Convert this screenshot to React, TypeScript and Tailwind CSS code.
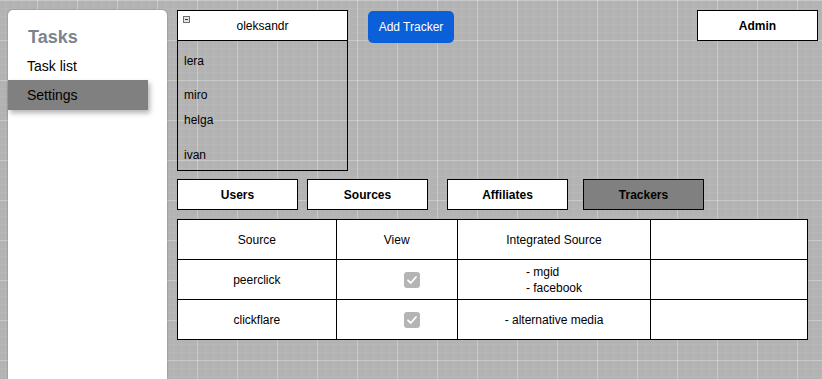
import React from 'react';

const tabs = [
  { label: 'Users', cls: '', active: false },
  { label: 'Sources', cls: 'ml-[9px]', active: false },
  { label: 'Affiliates', cls: 'ml-[19px]', active: false },
  { label: 'Trackers', cls: 'ml-[15px]', active: true },
];

const users = [
  { name: 'lera', cls: 'mt-[12px]' },
  { name: 'miro', cls: 'mt-[18px]' },
  { name: 'helga', cls: 'mt-[9px]' },
  { name: 'ivan', cls: 'mt-[19px]' },
];

const trackers = [
  { source: 'peerclick', integrated: ['- mgid', '- facebook'] },
  { source: 'clickflare', integrated: ['- alternative media'] },
];

function CheckedBox() {
  return (
    <div className="flex h-[16px] w-[16px] items-center justify-center rounded-[3px] bg-[#b4b4b4]">
      <svg width="12" height="12" viewBox="0 0 12 12" fill="none">
        <path d="M2 6.3 L4.8 9 L10 3" stroke="white" strokeWidth="1.8" strokeLinecap="round" strokeLinejoin="round" />
      </svg>
    </div>
  );
}

export default function App() {
  return (
    <div className="flex min-h-screen w-full bg-[#b3b3b3] bg-[linear-gradient(to_right,rgba(255,255,255,0.25)_1px,transparent_1px),linear-gradient(to_bottom,rgba(255,255,255,0.25)_1px,transparent_1px),linear-gradient(to_right,rgba(255,255,255,0.06)_1px,transparent_1px),linear-gradient(to_bottom,rgba(255,255,255,0.06)_1px,transparent_1px)] bg-[size:40px_40px,40px_40px,8px_8px,8px_8px] bg-[position:37px_0,0_0,5px_0,0_0] font-['Liberation_Sans',Arial,sans-serif] text-[12px] text-black">
      {/* sidebar */}
      <aside className="ml-[8px] mt-[10px] w-[159px] shrink-0 rounded-t-[5px] bg-white pt-[15px] shadow-[0_0_2px_rgba(0,0,0,0.35)]">
        <div className="pl-[20px] text-[18px] font-bold leading-[24px] text-[#7b848c]">Tasks</div>
        <div className="mt-[7px] pl-[19px] text-[14px] leading-[20px]">Task list</div>
        <div className="mt-[4px] flex h-[30px] w-[140px] items-center bg-[#808080] pl-[19px] text-[14px] shadow-[2px_3px_5px_rgba(0,0,0,0.3)]">
          Settings
        </div>
      </aside>

      <main className="ml-[10px] flex flex-1 flex-col pr-[4px] pt-[10px]">
        {/* top row */}
        <div className="flex items-start">
          <div className="flex h-[161px] w-[171px] flex-col border border-black">
            <div className="relative flex h-[30px] items-center justify-center border-b border-black bg-white">
              <span className="absolute left-[5px] top-[5px] flex h-[7px] w-[7px] items-center justify-center border border-[#6f6f6f] bg-[#e4e4e4]">
                <span className="h-px w-[3px] bg-[#333]" />
              </span>
              oleksandr
            </div>
            {users.map((u) => (
              <div key={u.name} className={`${u.cls} pl-[6px] leading-[16px]`}>
                {u.name}
              </div>
            ))}
          </div>

          <button className="ml-[20px] mt-[1px] h-[32px] w-[86px] rounded-[5px] bg-[#0b5fd9] text-[12px] text-white">
            Add Tracker
          </button>

          <button className="ml-auto h-[31px] w-[121px] border border-black bg-white text-[12px] font-bold">
            Admin
          </button>
        </div>

        {/* tabs */}
        <div className="mt-[8px] flex">
          {tabs.map((t) => (
            <button
              key={t.label}
              className={`${t.cls} h-[31px] w-[121px] border border-black text-[12px] font-bold ${t.active ? 'bg-[#808080]' : 'bg-white'}`}
            >
              {t.label}
            </button>
          ))}
        </div>

        {/* trackers table */}
        <table className="mt-[9px] w-[631px] border-collapse bg-white">
          <thead>
            <tr className="h-[40px]">
              <th className="w-[159px] border border-black font-normal">Source</th>
              <th className="w-[121px] border border-black font-normal">View</th>
              <th className="w-[194px] border border-black font-normal">Integrated Source</th>
              <th className="w-[157px] border border-black font-normal"></th>
            </tr>
          </thead>
          <tbody>
            {trackers.map((r) => (
              <tr key={r.source} className="h-[40px]">
                <td className="border border-black text-center">{r.source}</td>
                <td className="border border-black pl-[67px]">
                  <CheckedBox />
                </td>
                <td className="border border-black">
                  <div className="flex justify-center">
                    <div className="leading-[16px]">
                      {r.integrated.map((s) => (
                        <div key={s}>{s}</div>
                      ))}
                    </div>
                  </div>
                </td>
                <td className="border border-black"></td>
              </tr>
            ))}
          </tbody>
        </table>
      </main>
    </div>
  );
}
